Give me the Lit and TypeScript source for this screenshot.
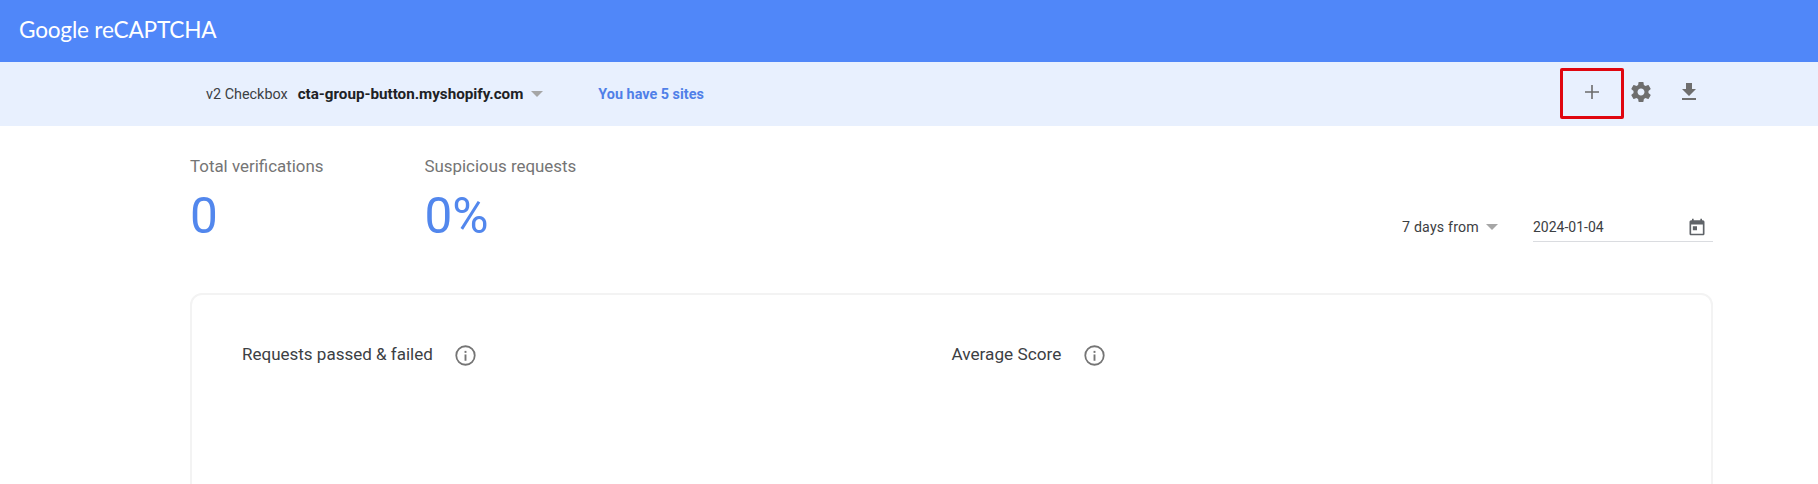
import { LitElement, html, css } from 'lit';
import { customElement } from 'lit/decorators.js';

const infoIcon = html`<svg class="info" viewBox="0 0 20 20" width="21" height="21">
  <circle cx="10" cy="10" r="8.8" fill="none" stroke="#757575" stroke-width="1.7"></circle>
  <rect x="9.1" y="9" width="1.8" height="6" fill="#757575"></rect>
  <rect x="9.1" y="5.6" width="1.8" height="1.9" fill="#757575"></rect>
</svg>`;

@customElement('app-root')
export class AppRoot extends LitElement {
  static styles = css`
    :host {
      display: block;
      height: 484px;
      overflow: hidden;
      background: #fff;
      font-family: Roboto, "Liberation Sans", sans-serif;
    }
    .header {
      display: flex;
      align-items: center;
      height: 62px;
      padding-left: 19px;
      background: #5087f9;
    }
    .logo {
      color: #fff;
      font-family: Lato, sans-serif;
      font-size: 22.6px;
      font-weight: 400;
      letter-spacing: -0.2px;
      padding-bottom: 3px;
    }
    .subbar {
      display: flex;
      align-items: center;
      height: 64px;
      padding-left: 206px;
      background: #e8f0fe;
      font-size: 14.4px;
    }
    .type {
      color: #3c4043;
      margin-right: 10px;
    }
    .site {
      color: #202124;
      font-size: 15.2px;
      font-weight: 700;
    }
    .caret {
      width: 0;
      height: 0;
      border-left: 6.5px solid transparent;
      border-right: 6.5px solid transparent;
      border-top: 6.5px solid #a6a6a6;
      margin-left: 8px;
    }
    .sites {
      color: #4f7fe8;
      font-weight: 700;
      margin-left: 55px;
    }
    .actions {
      display: flex;
      align-items: center;
      margin-left: auto;
      padding-right: 117px;
    }
    .add {
      display: flex;
      align-items: center;
      justify-content: center;
      box-sizing: border-box;
      width: 64px;
      height: 51px;
      margin-bottom: 1px;
      padding-bottom: 4px;
      border: 3px solid #e0060f;
      border-radius: 2px;
    }
    .gear {
      margin-left: 5px;
      margin-bottom: 4px;
    }
    .download {
      margin-left: 24px;
      margin-bottom: 4px;
    }
    .main {
      padding: 0 105px 0 190px;
    }
    .top {
      display: flex;
      align-items: flex-start;
    }
    .stat {
      display: flex;
      flex-direction: column;
      padding-top: 30px;
    }
    .stat + .stat {
      margin-left: 101px;
    }
    .label {
      color: #757575;
      font-size: 16.9px;
      line-height: 20px;
    }
    .value {
      color: #5287ed;
      font-size: 49.5px;
      line-height: 59px;
      margin-top: 11px;
    }
    .range {
      display: flex;
      align-items: center;
      margin-left: auto;
      margin-top: 88px;
      height: 26px;
      font-size: 14px;
      color: #3c4043;
    }
    .range .days {
      font-size: 14.2px;
      letter-spacing: 0.2px;
    }
    .range .caret {
      margin-left: 7px;
      margin-right: 35px;
    }
    .date {
      display: flex;
      align-items: center;
      justify-content: space-between;
      box-sizing: border-box;
      width: 180px;
      height: 30px;
      padding-right: 6px;
      border-bottom: 1px solid #dadce0;
    }
    .card {
      box-sizing: border-box;
      display: flex;
      height: 300px;
      margin-top: 47px;
      padding: 48px 50px;
      border: 2px solid #f3f3f3;
      border-radius: 12px;
    }
    .panel {
      display: flex;
      align-items: flex-start;
      width: 710px;
      color: #3c4043;
      font-size: 17px;
      line-height: 22px;
    }
    .info {
      margin-left: 22px;
      margin-top: 2px;
    }
    .panel + .panel {
      font-size: 17.2px;
    }
    .panel + .panel .info {
      margin-left: 23px;
    }
  `;

  render() {
    return html`
      <div class="header"><span class="logo">Google reCAPTCHA</span></div>
      <div class="subbar">
        <span class="type">v2 Checkbox</span>
        <span class="site">cta-group-button.myshopify.com</span>
        <span class="caret"></span>
        <span class="sites">You have 5 sites</span>
        <div class="actions">
          <div class="add">
            <svg viewBox="0 0 14 14" width="14" height="14"><path d="M6.2 0h1.6v6.2H14v1.6H7.8V14H6.2V7.8H0V6.2h6.2z" fill="#6b6b6b"></path></svg>
          </div>
          <svg class="gear" viewBox="0 0 24 24" width="24" height="24"><path fill="#6e6e6e" d="M19.43 12.98c.04-.32.07-.64.07-.98s-.03-.66-.07-.98l2.11-1.65c.19-.15.24-.42.12-.64l-2-3.46c-.12-.22-.39-.3-.61-.22l-2.49 1c-.52-.4-1.08-.73-1.69-.98l-.38-2.65C14.46 2.18 14.25 2 14 2h-4c-.25 0-.46.18-.49.42l-.38 2.65c-.61.25-1.17.59-1.69.98l-2.49-1c-.23-.09-.49 0-.61.22l-2 3.46c-.13.22-.07.49.12.64l2.11 1.65c-.04.32-.07.65-.07.98s.03.66.07.98l-2.11 1.65c-.19.15-.24.42-.12.64l2 3.46c.12.22.39.3.61.22l2.49-1c.52.4 1.08.73 1.69.98l.38 2.65c.03.24.24.42.49.42h4c.25 0 .46-.18.49-.42l.38-2.65c.61-.25 1.17-.59 1.69-.98l2.49 1c.23.09.49 0 .61-.22l2-3.46c.12-.22.07-.49-.12-.64l-2.11-1.65zM12 15.5c-1.93 0-3.5-1.57-3.5-3.5s1.57-3.5 3.5-3.5 3.5 1.57 3.5 3.5-1.57 3.5-3.5 3.5z"></path></svg>
          <svg class="download" viewBox="0 0 24 24" width="24" height="24"><path fill="#6e6e6e" d="M19 9h-4V3H9v6H5l7 7 7-7zM5 18v2h14v-2H5z"></path></svg>
        </div>
      </div>
      <div class="main">
        <div class="top">
          <div class="stat">
            <span class="label">Total verifications</span>
            <span class="value">0</span>
          </div>
          <div class="stat">
            <span class="label">Suspicious requests</span>
            <span class="value">0%</span>
          </div>
          <div class="range">
            <span class="days">7 days from</span>
            <span class="caret"></span>
            <div class="date">
              <span>2024-01-04</span>
              <svg viewBox="0 0 24 24" width="20" height="20"><path fill="#5f6368" d="M19 4h-1V2h-2v2H8V2H6v2H5c-1.1 0-2 .9-2 2v14c0 1.1.9 2 2 2h14c1.1 0 2-.9 2-2V6c0-1.1-.9-2-2-2zm0 16H5V9h14v11zM7 11h5v5H7z"></path></svg>
            </div>
          </div>
        </div>
        <div class="card">
          <div class="panel"><span>Requests passed &amp; failed</span>${infoIcon}</div>
          <div class="panel"><span>Average Score</span>${infoIcon}</div>
        </div>
      </div>
    `;
  }
}
